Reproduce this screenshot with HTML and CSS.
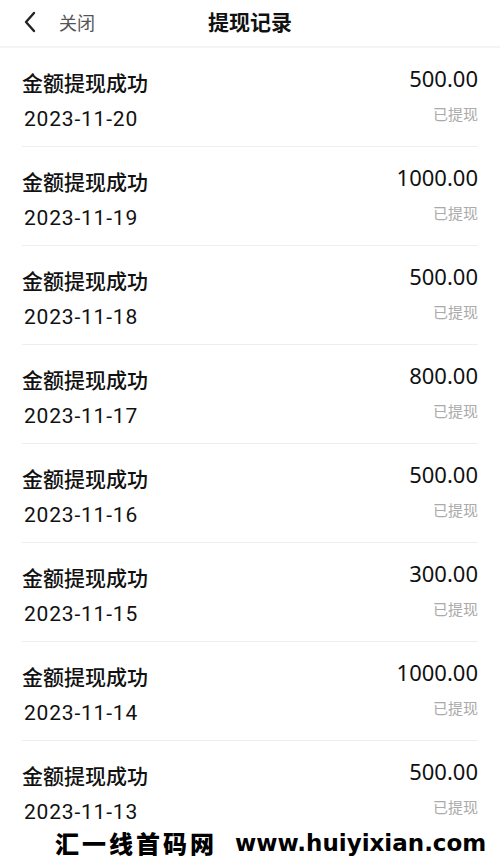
FILE: index.html
```html
<!DOCTYPE html>
<html lang="zh-CN">
<head>
    <meta charset="UTF-8">
    <meta name="viewport" content="width=device-width, initial-scale=1.0">
    <title>提现记录</title>
    <link rel="stylesheet" href="styles.css">
</head>
<body>
    <div class="page">
        <header class="topbar">
            <div class="back">
                <svg class="chevron" width="14" height="22" viewBox="0 0 14 22">
                    <path d="M11 2 L3 11 L11 20" fill="none" stroke="#222" stroke-width="2.4" stroke-linecap="round" stroke-linejoin="round"/>
                </svg>
                <span class="close">关闭</span>
            </div>
            <h1>提现记录</h1>
        </header>

        <ul class="records">
            <li class="record">
                <div class="left"><p class="title">金额提现成功</p><p class="date">2023-11-20</p></div>
                <div class="right"><p class="amount">500.00</p><p class="status">已提现</p></div>
            </li>
            <li class="record">
                <div class="left"><p class="title">金额提现成功</p><p class="date">2023-11-19</p></div>
                <div class="right"><p class="amount">1000.00</p><p class="status">已提现</p></div>
            </li>
            <li class="record">
                <div class="left"><p class="title">金额提现成功</p><p class="date">2023-11-18</p></div>
                <div class="right"><p class="amount">500.00</p><p class="status">已提现</p></div>
            </li>
            <li class="record">
                <div class="left"><p class="title">金额提现成功</p><p class="date">2023-11-17</p></div>
                <div class="right"><p class="amount">800.00</p><p class="status">已提现</p></div>
            </li>
            <li class="record">
                <div class="left"><p class="title">金额提现成功</p><p class="date">2023-11-16</p></div>
                <div class="right"><p class="amount">500.00</p><p class="status">已提现</p></div>
            </li>
            <li class="record">
                <div class="left"><p class="title">金额提现成功</p><p class="date">2023-11-15</p></div>
                <div class="right"><p class="amount">300.00</p><p class="status">已提现</p></div>
            </li>
            <li class="record">
                <div class="left"><p class="title">金额提现成功</p><p class="date">2023-11-14</p></div>
                <div class="right"><p class="amount">1000.00</p><p class="status">已提现</p></div>
            </li>
            <li class="record">
                <div class="left"><p class="title">金额提现成功</p><p class="date">2023-11-13</p></div>
                <div class="right"><p class="amount">500.00</p><p class="status">已提现</p></div>
            </li>
        </ul>

        <div class="watermark"><span class="wm-cn">汇一线首码网</span><span class="wm-url">www.huiyixian.com</span></div>
    </div>
</body>
</html>
```

FILE: styles.css
```css
* {
    box-sizing: border-box;
}

body {
    margin: 0;
    background: #fff;
    color: #111;
    font-family: "Noto Sans", "Noto Sans CJK SC", sans-serif;
}

.page {
    position: relative;
    width: 500px;
    height: 861px;
}

.topbar {
    height: 48px;
    display: flex;
    align-items: center;
    justify-content: center;
    position: relative;
    border-bottom: 2px solid #f4f4f4;
}

.back {
    position: absolute;
    left: 23px;
    top: 9px;
    display: flex;
    align-items: center;
    gap: 22px;
}

.close {
    font-family: "Noto Sans CJK SC", sans-serif;
    font-size: 18px;
    color: #555;
}

.topbar h1 {
    margin: -4px 0 0;
    font-family: "Noto Sans CJK SC", sans-serif;
    font-size: 21px;
    font-weight: 700;
    color: #111;
}

.records {
    list-style: none;
    margin: 0;
    padding: 0 22px;
}

.record {
    height: 99px;
    display: flex;
    justify-content: space-between;
    border-bottom: 1px solid #eee;
}

.record:last-child {
    border-bottom: none;
}

.record p {
    margin: 0;
}

.left {
    padding-top: 22px;
}

.title {
    font-family: "Noto Sans CJK SC", sans-serif;
    font-size: 21px;
    font-weight: 500;
    line-height: 24px;
}

.date {
    margin-top: 13px !important;
    font-family: Roboto, "Noto Sans", sans-serif;
    font-size: 21px;
    line-height: 24px;
    letter-spacing: 0.8px;
    padding-left: 2px;
}

.right {
    padding-top: 18px;
    text-align: right;
}

.amount {
    font-size: 22px;
    line-height: 24px;
}

.status {
    margin-top: 14px !important;
    font-family: "Noto Sans CJK SC", sans-serif;
    font-size: 15px;
    line-height: 20px;
    color: #aaa;
}

.watermark {
    position: absolute;
    left: 0;
    right: 0;
    bottom: 4px;
    height: 28px;
    padding-left: 55px;
    display: flex;
    align-items: center;
    gap: 18px;
    color: #000;
}

.wm-cn {
    font-family: "Noto Sans CJK SC", sans-serif;
    font-size: 24px;
    font-weight: 900;
    line-height: 28px;
    letter-spacing: 3px;
}

.wm-url {
    font-family: "DejaVu Sans", sans-serif;
    font-size: 23px;
    font-weight: 700;
    line-height: 28px;
}
```
